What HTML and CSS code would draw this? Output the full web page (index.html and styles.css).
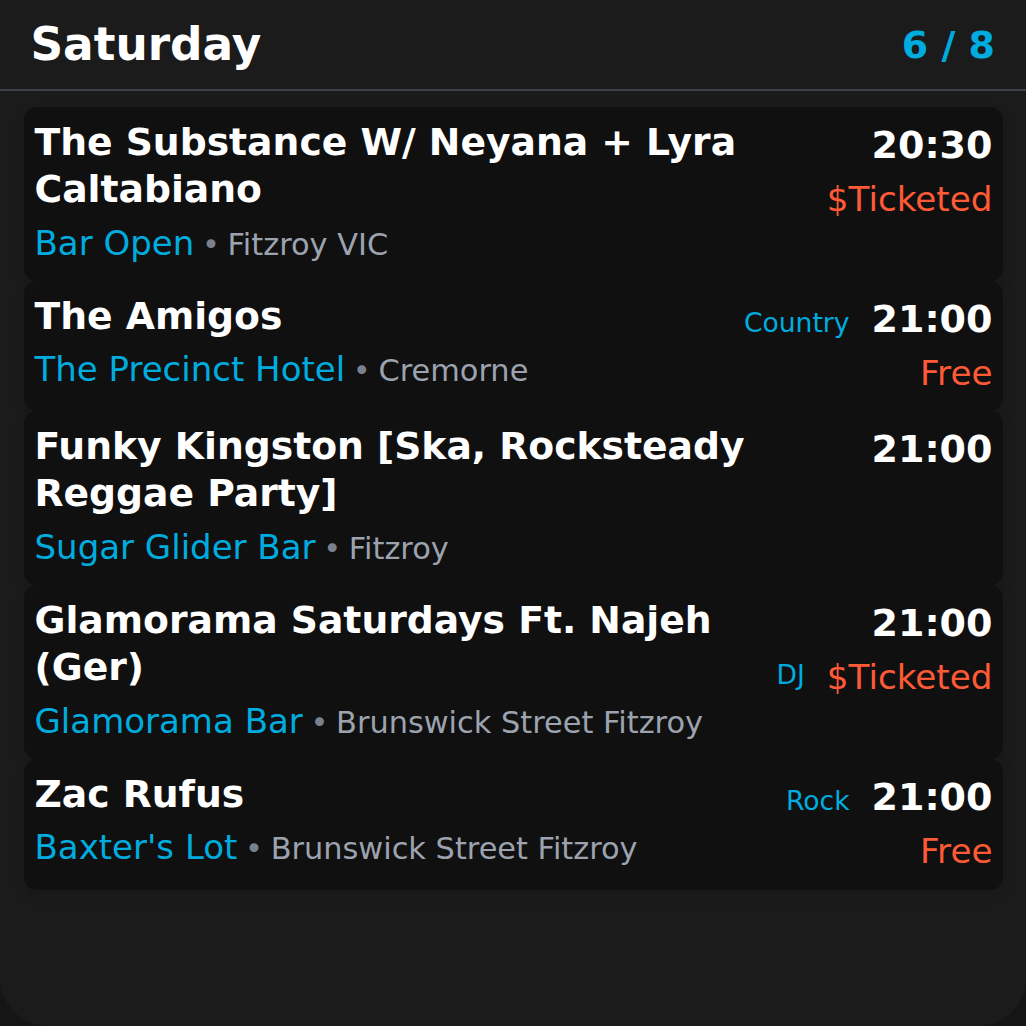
FILE: index.html
```html
<!DOCTYPE html>
<html>
<head>
<meta charset="utf-8">
<link rel="stylesheet" href="styles.css">
</head>
<body>
<div class="screen">
  <header class="header">
    <h1 class="day">Saturday</h1>
    <div class="count">6 / 8</div>
  </header>
  <main class="list">
    <article class="card">
      <div class="info">
        <div class="title">The Substance W/ Neyana + Lyra Caltabiano</div>
        <div class="venue"><span class="place">Bar Open</span> <span class="dot">•</span> <span class="loc">Fitzroy VIC</span></div>
      </div>
      <div class="side">
        <div class="row"><span class="time">20:30</span></div>
        <div class="row row2"><span class="price">$Ticketed</span></div>
      </div>
    </article>
    <article class="card">
      <div class="info">
        <div class="title">The Amigos</div>
        <div class="venue"><span class="place">The Precinct Hotel</span> <span class="dot">•</span> <span class="loc">Cremorne</span></div>
      </div>
      <div class="side">
        <div class="row"><span class="genre">Country</span><span class="time">21:00</span></div>
        <div class="row row2"><span class="price">Free</span></div>
      </div>
    </article>
    <article class="card">
      <div class="info">
        <div class="title">Funky Kingston [Ska, Rocksteady Reggae Party]</div>
        <div class="venue"><span class="place">Sugar Glider Bar</span> <span class="dot">•</span> <span class="loc">Fitzroy</span></div>
      </div>
      <div class="side">
        <div class="row"><span class="time">21:00</span></div>
      </div>
    </article>
    <article class="card">
      <div class="info">
        <div class="title">Glamorama Saturdays Ft. Najeh (Ger)</div>
        <div class="venue"><span class="place">Glamorama Bar</span> <span class="dot">•</span> <span class="loc">Brunswick Street Fitzroy</span></div>
      </div>
      <div class="side">
        <div class="row"><span class="time">21:00</span></div>
        <div class="row row2"><span class="genre genre-low">DJ</span><span class="price">$Ticketed</span></div>
      </div>
    </article>
    <article class="card">
      <div class="info">
        <div class="title">Zac Rufus</div>
        <div class="venue"><span class="place">Baxter's Lot</span> <span class="dot">•</span> <span class="loc">Brunswick Street Fitzroy</span></div>
      </div>
      <div class="side">
        <div class="row"><span class="genre">Rock</span><span class="time">21:00</span></div>
        <div class="row row2"><span class="price">Free</span></div>
      </div>
    </article>
  </main>
</div>
</body>
</html>
```
FILE: styles.css
```css
* { box-sizing: border-box; }
html, body {
  margin: 0;
  padding: 0;
  background: #151515;
}
body {
  font-family: "DejaVu Sans", "Liberation Sans", sans-serif;
  font-size: 30.4px;
  color: #fff;
}
.screen {
  width: 1026px;
  height: 1026px;
  background: #1b1b1b;
  border-radius: 0 0 48px 48px;
  overflow: hidden;
}
.header {
  height: 91px;
  display: flex;
  align-items: center;
  justify-content: space-between;
  padding: 0 31px 0 30.4px;
  border-bottom: 2px solid #3a3f4a;
}
.day {
  margin: 0;
  font-size: 45.4px;
  font-weight: bold;
  color: #fff;
  line-height: 1;
}
.count {
  font-size: 38px;
  font-weight: bold;
  color: #00acdf;
  line-height: 1;
}
.list {
  padding: 16px 23.5px 0 23.5px;
  display: flex;
  flex-direction: column;
}
.card {
  background: #101010;
  border-radius: 13px;
  padding: 11.5px 10px 12.5px 11px;
  display: flex;
  justify-content: space-between;
  align-items: flex-start;
  gap: 24px;
  box-shadow: 0 6px 14px rgba(0, 0, 0, 0.12);
}
.info {
  flex: 1;
  min-width: 0;
}
.title {
  font-size: 37.7px;
  font-weight: bold;
  line-height: 47.5px;
  color: #fff;
}
.venue {
  margin-top: 4px;
  font-size: 30.4px;
  line-height: 1.5;
  white-space: nowrap;
}
.place {
  font-size: 34px;
  color: #00acdf;
}
.dot {
  color: #7b818c;
  margin: 0 -2px;
}
.loc {
  color: #9ca3af;
}
.side {
  display: flex;
  flex-direction: column;
  align-items: flex-end;
}
.row {
  display: flex;
  align-items: baseline;
  justify-content: flex-end;
  gap: 22px;
  white-space: nowrap;
}
.row2 {
  margin-top: 2px;
}
.time {
  font-size: 38px;
  font-weight: bold;
  line-height: 1.4;
  color: #fff;
}
.genre {
  font-size: 26.6px;
  line-height: 1.5;
  color: #00acdf;
}
.genre-low {
  position: relative;
  top: -5px;
}
.price {
  font-size: 34.2px;
  line-height: 1.5;
  color: #ff5a36;
}
```
